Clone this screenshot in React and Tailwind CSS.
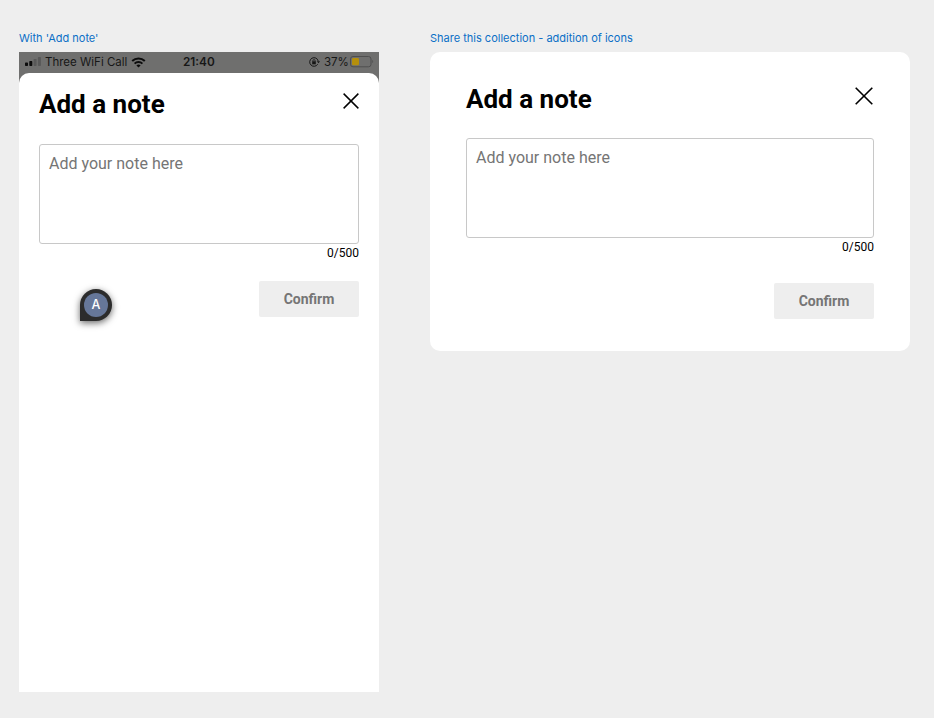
function CloseIcon({ className }) {
  return (
    <svg viewBox="0 0 18 18" className={className} fill="none" stroke="#000" strokeWidth="1.6">
      <path d="M.7.7l16.6 16.6M17.3.7L.7 17.3" />
    </svg>
  );
}

function NoteField() {
  return (
    <>
      <div className="h-[100px] rounded-[3px] border border-[#c8c8c8] px-[9px] pt-[9px] text-[16px] leading-5 text-[#757575]">
        Add your note here
      </div>
      <div className="h-[18px] text-right text-[12px] leading-[18px] text-black">0/500</div>
    </>
  );
}

function ConfirmButton() {
  return (
    <button className="block h-9 w-[100px] rounded-[2px] bg-[#eeeeee] text-[14px] leading-9 font-bold text-[#757575]">
      Confirm
    </button>
  );
}

function StatusBar() {
  return (
    <div className="flex h-[21px] items-center pb-px font-['Inter',sans-serif] text-[11.5px] leading-5 text-[#171717]">
      <svg className="ml-[6px] h-[10px] w-[16px] shrink-0" viewBox="0 0 16 10">
        <rect x="0" y="5.5" width="3" height="3.5" rx=".7" fill="#0c0c0c" />
        <rect x="4.3" y="4" width="3" height="5" rx=".7" fill="#0c0c0c" />
        <rect x="8.6" y="2" width="3" height="7" rx=".7" fill="#585858" />
        <rect x="12.9" y="0" width="3" height="9" rx=".7" fill="#585858" />
      </svg>
      <span className="ml-[4px] w-[82px] whitespace-nowrap">Three WiFi Call</span>
      <svg className="ml-[4px] h-[11px] w-[15px] shrink-0" viewBox="0 0 15 11" fill="none" stroke="#0c0c0c" strokeWidth="2">
        <path d="M1.2 4a9 9 0 0 1 12.6 0M3.6 6.6a5.5 5.5 0 0 1 7.8 0" />
        <path d="M5.4 8.5a3 3 0 0 1 4.2 0l-2.1 2.1z" fill="#0c0c0c" stroke="none" />
      </svg>
      <span className="ml-[37px] w-[33px] whitespace-nowrap text-[11.8px] font-semibold">21:40</span>
      <svg className="ml-[93px] h-[10px] w-[11px] shrink-0" viewBox="0 0 11 10" fill="none" stroke="#161616" strokeWidth="1">
        <path d="M8.7 7.2A4.3 4.3 0 1 1 9.2 4" />
        <path d="M7.8 4.2h3.2L9.5 6.2z" fill="#161616" stroke="none" />
        <rect x="3.2" y="4.3" width="3.6" height="3" fill="#161616" stroke="none" />
        <path d="M3.9 4.6V3.7a1.1 1.1 0 0 1 2.2 0v.9" strokeWidth=".8" />
      </svg>
      <span className="ml-[4px] w-[25px] whitespace-nowrap">37%</span>
      <svg className="ml-[1px] h-[12px] w-[24px] shrink-0" viewBox="0 0 24 12">
        <rect x=".5" y=".5" width="20.5" height="10.3" rx="2.5" fill="none" stroke="#4f4f4f" />
        <rect x="2" y="2" width="7" height="7.3" rx="1.2" fill="#b58f0c" />
        <path d="M22.3 4.1c1.2.5 1.2 2.5 0 3z" fill="#4f4f4f" />
      </svg>
    </div>
  );
}

export default function App() {
  return (
    <div className="flex h-[718px] w-[934px] items-start gap-[51px] overflow-hidden bg-[#eeeeee] pl-[19px] pt-[30px] font-['Roboto',sans-serif]">
      <section className="w-[360px]">
        <h2 className="h-[22px] font-['Inter',sans-serif] text-[11px] leading-4 text-[#0b6fc6]">With 'Add note'</h2>
        <div className="h-[640px] bg-[linear-gradient(#6f6f6e_40px,#fff_40px)]">
          <StatusBar />
          <div className="relative h-[619px] rounded-t-[10px] bg-white px-5 pt-4">
            <div className="flex h-[55px] justify-between">
              <h1 className="text-[26px] leading-[30px] font-bold text-black">Add a note</h1>
              <CloseIcon className="mt-1 h-4 w-4" />
            </div>
            <NoteField />
            <div className="flex justify-end pt-[19px]">
              <ConfirmButton />
            </div>
            <div className="absolute left-[61px] top-[216px] flex size-8 items-center justify-center rounded-full rounded-bl-none bg-[#2c2c2c] shadow-[0_2px_7px_rgba(0,0,0,0.6)]">
              <span className="flex size-6 items-center justify-center rounded-full bg-[#667799] pt-px font-['Inter',sans-serif] text-[12.5px] font-medium text-white">A</span>
            </div>
          </div>
        </div>
      </section>
      <section className="w-[480px]">
        <h2 className="h-[22px] font-['Inter',sans-serif] text-[11px] leading-4 text-[#0b6fc6]">Share this collection - addition of icons</h2>
        <div className="h-[299px] rounded-[10px] bg-white px-9 pt-8">
          <div className="flex h-[54px] justify-between">
            <h1 className="text-[26px] leading-[30px] font-bold text-black">Add a note</h1>
            <CloseIcon className="mt-[3px] mr-px h-[18px] w-[18px]" />
          </div>
          <NoteField />
          <div className="flex justify-end pt-[27px]">
            <ConfirmButton />
          </div>
        </div>
      </section>
    </div>
  );
}
